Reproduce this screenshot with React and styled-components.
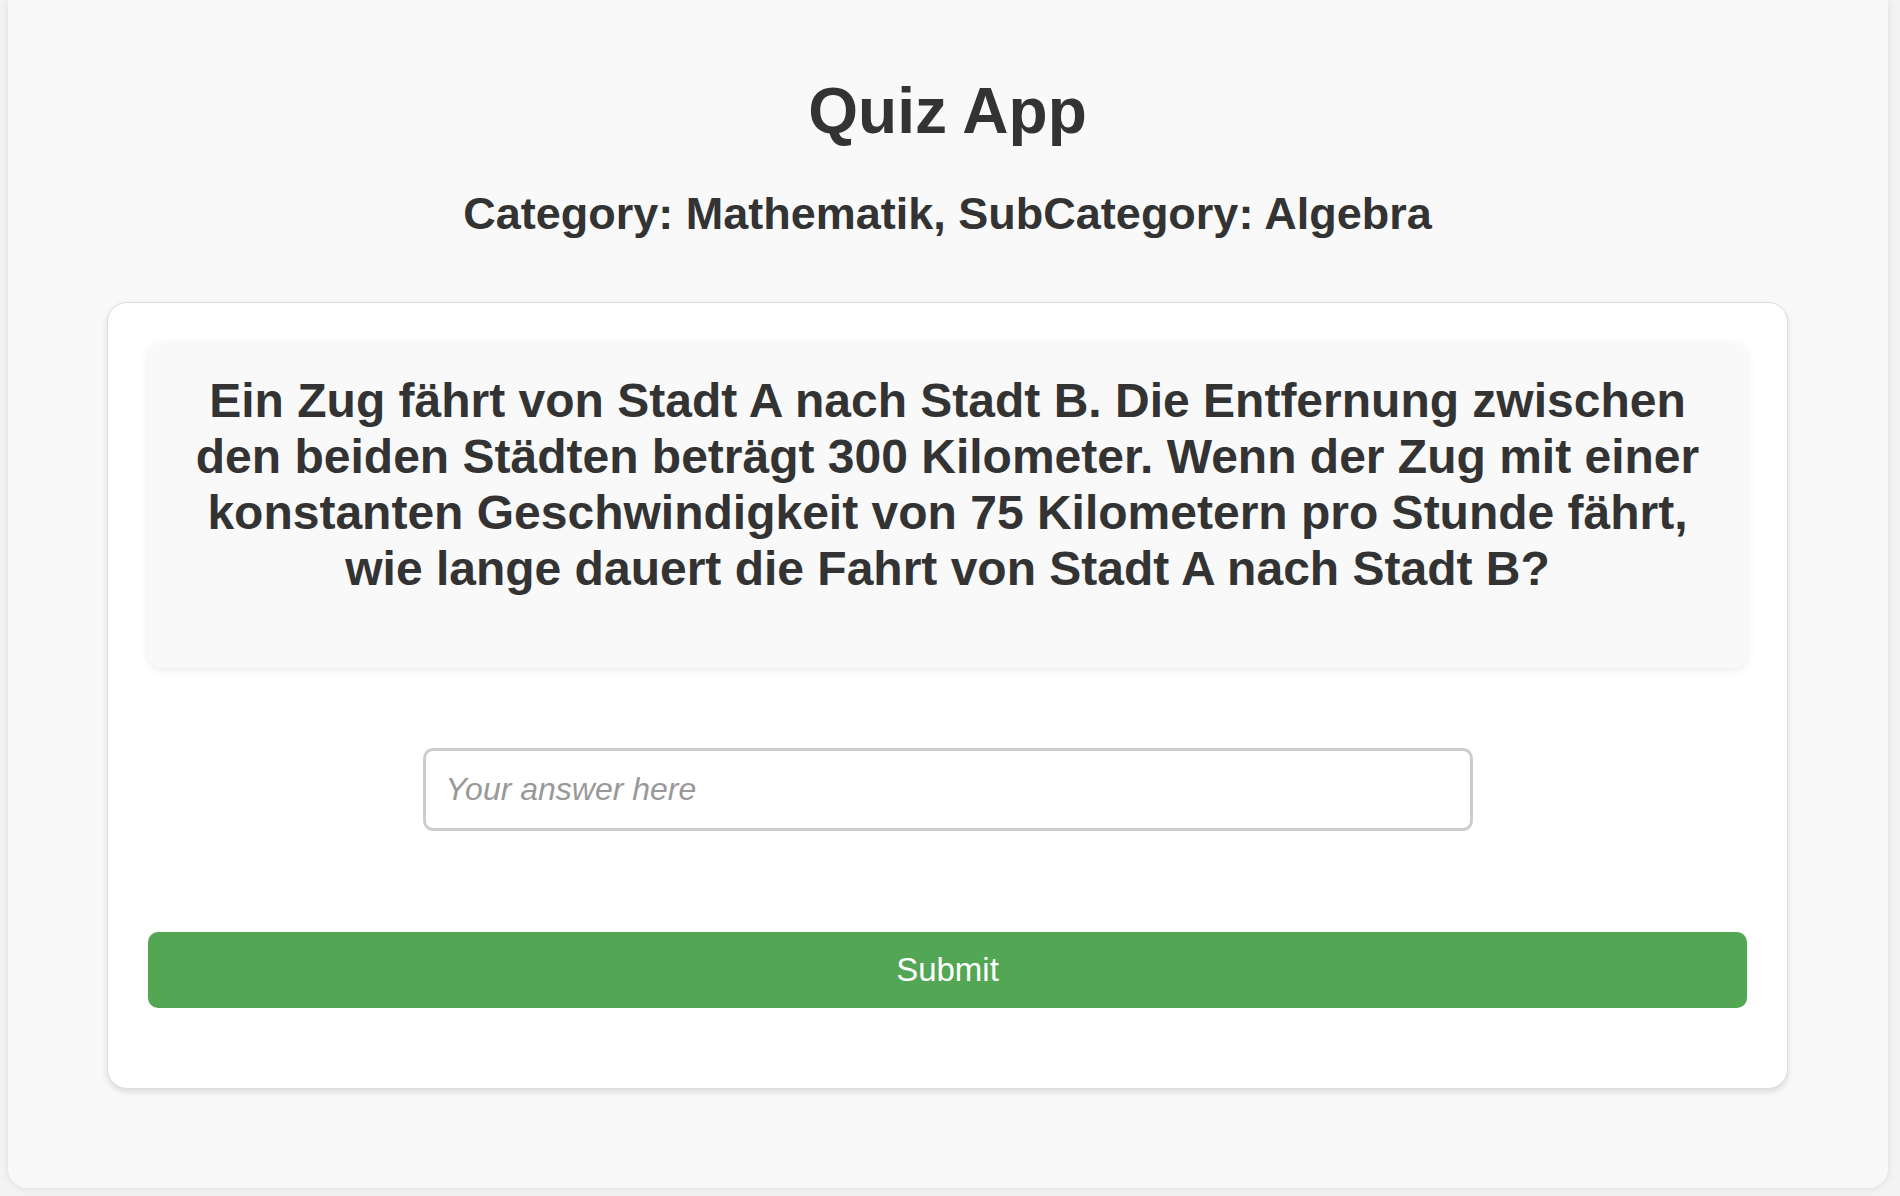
import styled, { createGlobalStyle } from "styled-components";
import { useState } from "react";

const GlobalStyle = createGlobalStyle`
  html, body {
    margin: 0;
    padding: 0;
    background: #f4f4f4;
  }
  body {
    padding: 0 12px 8px 8px;
    font-family: "Liberation Sans", Arial, Helvetica, sans-serif;
    color: #333;
  }
  * {
    box-sizing: border-box;
  }
`;

const quiz = {
  category: "Mathematik",
  subCategory: "Algebra",
  question:
    "Ein Zug fährt von Stadt A nach Stadt B. Die Entfernung zwischen den beiden Städten beträgt 300 Kilometer. Wenn der Zug mit einer konstanten Geschwindigkeit von 75 Kilometern pro Stunde fährt, wie lange dauert die Fahrt von Stadt A nach Stadt B?",
};

const App = () => {
  const [answer, setAnswer] = useState("");

  const onSubmit = (e) => {
    e.preventDefault();
  };

  return (
    <>
      <GlobalStyle />
      <Container>
        <Title>Quiz App</Title>
        <SubTitle>
          Category: {quiz.category}, SubCategory: {quiz.subCategory}
        </SubTitle>
        <Card onSubmit={onSubmit}>
          <QuestionBox>
            <QuestionText>{quiz.question}</QuestionText>
          </QuestionBox>
          <AnswerInput
            type="text"
            placeholder="Your answer here"
            value={answer}
            onChange={(e) => setAnswer(e.target.value)}
          />
          <SubmitButton type="submit">Submit</SubmitButton>
        </Card>
      </Container>
    </>
  );
};

export default App;

const Container = styled.div`
  display: flex;
  flex-direction: column;
  align-items: center;
  height: 1188px;
  padding: 74px 100px 0 99px;
  background: #f9f9f9;
  border-radius: 0 0 20px 20px;
  box-shadow: 0 0 10px rgba(0, 0, 0, 0.1);
`;

const Title = styled.h1`
  margin: 0;
  font-size: 64px;
  font-weight: bold;
  line-height: 74px;
  color: #333;
`;

const SubTitle = styled.h2`
  margin: 40px 0 0;
  font-size: 45px;
  font-weight: bold;
  line-height: 52px;
  color: #333;
`;

const Card = styled.form`
  display: flex;
  flex-direction: column;
  align-items: center;
  width: 100%;
  margin-top: 62px;
  padding: 40px 40px 80px;
  background: #fff;
  border: 1px solid #ddd;
  border-radius: 20px;
  box-shadow: 0 3px 6px rgba(0, 0, 0, 0.12);
`;

const QuestionBox = styled.div`
  width: 100%;
  height: 325px;
  padding: 30px 35px 0;
  background: #f9f9f9;
  border-radius: 14px;
  box-shadow: 0 2px 10px rgba(0, 0, 0, 0.08);
`;

const QuestionText = styled.p`
  margin: 0;
  font-size: 48px;
  font-weight: bold;
  line-height: 56px;
  text-align: center;
  color: #333;
`;

const AnswerInput = styled.input`
  width: 1050px;
  height: 83px;
  margin-top: 80px;
  padding: 0 20px;
  font-family: "Liberation Sans", Arial, sans-serif;
  font-size: 32px;
  color: #333;
  background: #fff;
  border: 3px solid #ccc;
  border-radius: 10px;
  outline: none;

  &::placeholder {
    color: #999;
    font-style: italic;
  }
`;

const SubmitButton = styled.button`
  width: 100%;
  height: 76px;
  margin-top: 101px;
  font-family: "Liberation Sans", Arial, sans-serif;
  font-size: 33px;
  color: #fff;
  background: #53a653;
  border: none;
  border-radius: 10px;
  cursor: pointer;
`;
